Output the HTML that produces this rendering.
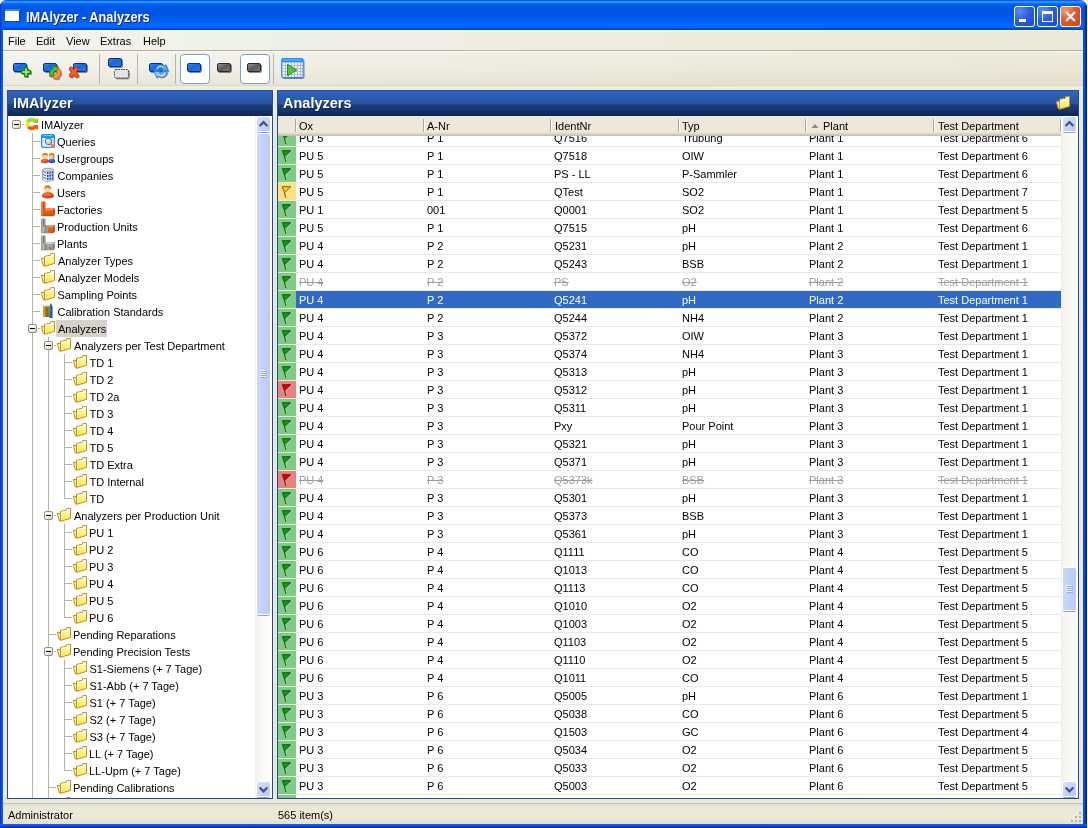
<!DOCTYPE html>
<html lang="en"><head><meta charset="utf-8"><title>IMAlyzer - Analyzers</title>
<style>
html,body{margin:0;padding:0;}
body{width:1088px;height:828px;overflow:hidden;background:#fff;font-family:"Liberation Sans",sans-serif;font-size:11px;color:#000;position:relative;}
#win{position:absolute;left:0;top:0;width:1087px;height:828px;background:#ece9d8;border-radius:6px 7px 0 0;overflow:hidden;will-change:transform;}
#win *{position:absolute;box-sizing:border-box;}
i,b{display:block;font-style:normal;font-weight:normal;}
/* title bar */
#tb{left:0;top:0;width:1087px;height:30px;background:linear-gradient(to bottom,#0046e0 0px,#0a5cec 0.5px,#3c98ff 1.700px,#2a88ff 2.500px,#0a70fa 3.500px,#0064f0 4.500px,#005ae6 6.500px,#0055e1 10px,#0056e4 15px,#005df0 19px,#0066fc 23px,#0067fe 27px,#005cf0 28px,#0046d2 29px,#0036bc 30px);}
#tbl{left:0;top:4px;width:3px;height:824px;background:linear-gradient(to right,#0131bd,#0b54e4 60%,#1660ee);}
#tbr{left:1083px;top:5px;width:4px;height:823px;background:linear-gradient(to right,#0d55ea 0%,#0648dc 40%,#0129b4 75%,#00178f 100%);}
#tbb{left:0;top:824px;width:1087px;height:4px;background:linear-gradient(to bottom,#1660ee,#0b54e4 40%,#0131bd 75%,#001ea0);}
#ticon{left:5px;top:9px;width:15px;height:13px;background:#fffffa;border-top:2px solid #3c80e4;border-right:1px solid #1a48b4;border-bottom:1px solid #1a48b4;}#ticon:after{content:"";position:absolute;right:0;top:-1px;width:1px;height:1px;background:#f0642a;}
#ttxt{left:26px;top:7px;height:20px;line-height:20px;font-size:14.500px;font-weight:bold;color:#fff;text-shadow:1px 1px 0 #0a1883;letter-spacing:0;white-space:nowrap;transform:scaleX(0.88);transform-origin:0 0;}
.wb{top:6px;margin-left:-1px;width:21px;height:21px;border:1px solid #fff;border-radius:3px;background:radial-gradient(circle at 25% 20%,#5d8af5 0%,#2d5fe4 45%,#1f48c8 100%);}
.wb.cl{background:radial-gradient(circle at 22% 18%,#f09a80 0%,#e25a30 45%,#d8400f 100%);}
/* menu */
#menu{left:3px;top:30px;width:1080px;height:20px;border-top:1px solid #fcfbf2;background:linear-gradient(to right,#f4f3ee 0%,#f1f0e8 25%,#eeebdc 70%,#ede9d8 100%);}
#menu span{top:3px;height:14px;line-height:14px;font-size:11px;letter-spacing:0;white-space:nowrap;}
#ml1{left:3px;top:50px;width:1080px;height:1px;background:#b4b09f;}
#ml2{left:3px;top:51px;width:1080px;height:1px;background:#fbfaf6;}
#tool{left:3px;top:52px;width:1080px;height:33px;background:linear-gradient(to bottom,rgba(255,255,255,0.12) 0%,rgba(255,255,255,0) 45%,rgba(150,140,100,0.10) 100%),linear-gradient(to right,#f3f2ec 0%,#f0efe6 25%,#edeadb 70%,#ece8d7 100%);}
#tl1{left:3px;top:85px;width:1080px;height:1px;background:#dcd8c6;}
#tl2{left:3px;top:86px;width:1080px;height:4px;background:#f1eddb;}
.sep{top:54px;width:1px;height:30px;background:#b9b5a4;}
.pbtn{top:54px;width:30px;height:30px;background:#fff;border:1px solid #7f9fc6;border-radius:4px;}
.tico{overflow:visible;}
/* panels */
.panel{top:90px;height:709px;border:1px solid #1f4b9c;border-top:none;background:#fff;}
#pl{left:7px;width:266px;}
#pr{left:277px;width:802px;}
.ph{left:-1px;top:0;height:26px;background:linear-gradient(to bottom,#3065c0 0%,#2c5db4 22%,#27549f 52%,#1c407c 55%,#15346c 78%,#0c2452 100%);border-left:1px solid #1f4b9c;border-right:1px solid #1f4b9c;border-top:1px solid #2a569f;}
.pht{left:5px;top:2px;height:20px;line-height:20px;font-size:15.5px;font-weight:bold;color:#fff;transform:scaleX(0.935);transform-origin:0 0;white-space:nowrap;text-shadow:1px 1px 0 rgba(5,20,60,0.55);}
/* tree */
#tree{left:0;top:116px;width:255px;height:682px;overflow:hidden;}
.vl{width:1px;background:#b8b4a2;}
.hl{height:1px;background:#b8b4a2;}
.ex{width:9px;height:9px;border:1px solid #8c917b;border-radius:2px;background:linear-gradient(135deg,#fff 0%,#f4f3ec 50%,#cfcdbd 100%);}
.ex b{left:1px;top:3px;width:5px;height:1px;background:#000;}
.ti{overflow:visible;}
.tt{height:16px;line-height:16px;font-size:11px;letter-spacing:0;white-space:nowrap;padding:0 2px;margin-left:-2px;}
.tsel{background:#d5d2c9;margin-top:-1px;height:17px;line-height:18px;padding-right:1px;}
/* scrollbars */
.sb{width:17px;background:linear-gradient(to right,#f2f0ea 0%,#f8f7f3 40%,#fefefd 100%);}
.sbtn{left:2px;width:13px;height:14px;border-radius:2px;background:linear-gradient(135deg,#d6e1fd 0%,#c2d2fb 60%,#b4c7f7 100%);box-shadow:0 0 0 1px #fff,0 2px 0 0 #84a4e2;}
.sth{left:2px;width:13px;border-radius:2px;background:linear-gradient(to right,#c9d8fc 0%,#c1d1fa 50%,#b9cbf8 100%);box-shadow:0 0 0 1px #fff,0 2px 0 0 #84a4e2;}
.grip{left:3px;width:6px;height:8px;background:repeating-linear-gradient(to bottom,#f4f8ff 0,#f4f8ff 1px,rgba(255,255,255,0) 1px,rgba(255,255,255,0) 2px);}.grip:after{content:"";position:absolute;left:1px;top:1px;width:6px;height:8px;background:repeating-linear-gradient(to bottom,#8aa8f0 0,#8aa8f0 1px,rgba(255,255,255,0) 1px,rgba(255,255,255,0) 2px);}
/* grid */
#gh{left:278px;top:116px;width:783px;height:20px;background:linear-gradient(to bottom,#ece9d8 0,#ece9d8 16px,#e4e1cf 17px,#d8d4c3 18px,#cac6b4 19px,#c2beab 20px);}
#ghl{display:none;}
#gh span{top:3px;height:14px;line-height:14px;font-size:11px;letter-spacing:0;white-space:nowrap;}
#gh i{top:3px;width:1px;height:13px;background:#aca899;box-shadow:1px 0 0 #fff;}
#grid{left:278px;top:136px;width:783px;height:662px;overflow:hidden;background:#fff;}
.gr{left:0;width:783px;height:18px;border-bottom:1px solid #ece9d8;}
.gr.sel{background:#316ac5;color:#fff;}
.gr.del{color:#9d9d9d;text-decoration:line-through;}
.gc{top:1px;height:17px;line-height:17px;font-size:11px;letter-spacing:0;white-space:nowrap;}
.del .gc{text-decoration:line-through;}
.fc{left:0;top:0;width:18px;height:17px;}
.fg{background:#7fca84;}.fy{background:#ffe07f;}.fr{background:#e88181;}
.fc svg{left:0;top:0;}
/* status */
#sl1{left:3px;top:803px;width:1080px;height:1px;background:#c5c2b2;}
#st{left:3px;top:804px;width:1080px;height:20px;background:linear-gradient(to bottom,#e3e0cf 0%,#ebe8d7 20%,#ece9d8 70%,#e4e0cc 100%);}
#st span{top:4px;height:14px;line-height:14px;letter-spacing:0;white-space:nowrap;}

</style></head>
<body>
<svg width="0" height="0" style="position:absolute"><defs>
<linearGradient id="gfold" x1="0.6" y1="0" x2="0.35" y2="1"><stop offset="0" stop-color="#fffce2"/><stop offset="0.4" stop-color="#fff692"/><stop offset="1" stop-color="#ffe334"/></linearGradient>
<linearGradient id="gblue" x1="0" y1="0" x2="0" y2="1"><stop offset="0" stop-color="#1f6fe0"/><stop offset="1" stop-color="#3f96f4"/></linearGradient>
<linearGradient id="ggray" x1="0" y1="0" x2="0" y2="1"><stop offset="0" stop-color="#5a5a5a"/><stop offset="1" stop-color="#8a8a8a"/></linearGradient>
<linearGradient id="gor" x1="0" y1="0" x2="0" y2="1"><stop offset="0" stop-color="#f47a20"/><stop offset="1" stop-color="#d84e05"/></linearGradient>
<linearGradient id="ggr" x1="0" y1="0" x2="1" y2="0"><stop offset="0" stop-color="#8e8e8e"/><stop offset="0.12" stop-color="#c4c4c4"/><stop offset="0.3" stop-color="#8a8a8a"/><stop offset="0.6" stop-color="#b4b4b4"/><stop offset="1" stop-color="#7a7a7a"/></linearGradient>
<symbol id="i-folder" viewBox="0 0 16 16"><path d="M1.300 6.300 L4.400 6.600 L4.500 14.200 L3.200 13.400 Z" fill="#fff4c4" stroke="#c48e14" stroke-width="1" stroke-linejoin="round"/><path d="M4.500 4.400 L10.300 3.300 L10.700 1.600 L14.500 1.600 L14.500 11.400 L4.600 14.300 Z" fill="url(#gfold)" stroke="#c48e14" stroke-width="1" stroke-linejoin="round"/><path d="M5.500 5.300 L11.100 4.200 L11.500 2.600 L13.600 2.600 L13.600 5" fill="none" stroke="#fffff2" stroke-width="0.900"/><path d="M5.500 5.600 L5.500 12.800" fill="none" stroke="#fffde0" stroke-width="0.800"/></symbol>
<symbol id="i-root" viewBox="0 0 16 16"><path d="M4.390 10.860 A4.450 4.450 0 0 1 3.770 6.120" fill="none" stroke="#ffe030" stroke-width="3.700"/><path d="M3.770 6.120 A4.450 4.450 0 0 1 11.210 5.140" fill="none" stroke="#98da28" stroke-width="3.700"/><path d="M14.100 1.700 L14.100 6.900 L8.800 6.800 Z" fill="#8ed41e"/><path d="M11.210 10.860 A4.450 4.450 0 0 1 4.390 10.860" fill="none" stroke="#f25e04" stroke-width="3.700"/><path d="M14.100 14.300 L14.100 9.100 L8.800 9.200 Z" fill="#ee5600"/><path d="M4.800 4.300 A4.900 4.900 0 0 1 10.600 3.600" fill="none" stroke="#b2e64e" stroke-width="0.900"/></symbol>
<symbol id="i-query" viewBox="0 0 16 16"><rect x="1.600" y="1.600" width="12.800" height="12.800" rx="1.600" fill="#f6f2ff" stroke="#0a96fa" stroke-width="1.300"/><rect x="1.600" y="1.600" width="12.800" height="3.300" rx="1" fill="#0a96fa"/><path d="M2.800 2.700 H12.600" stroke="#a6d8ff" stroke-width="0.800"/><g fill="#e2d6f4"><rect x="3" y="6.500" width="1" height="1"/><rect x="3" y="8.500" width="1" height="1"/><rect x="3" y="10.500" width="1" height="1"/><rect x="3" y="12.400" width="10" height="0.900"/><rect x="12" y="6.500" width="1" height="1"/><rect x="12" y="8.500" width="1" height="1"/></g><circle cx="8.500" cy="8.400" r="3.100" fill="#a6e2ff" stroke="#6e7074" stroke-width="1.100"/><circle cx="7.700" cy="7.500" r="1.300" fill="#e8f8ff"/><path d="M11.300 11.300 L13.700 13.700" stroke="#fa7420" stroke-width="2.400" stroke-linecap="round"/><path d="M11.800 11.800 L13.600 13.600" stroke="#ffd040" stroke-width="0.700" stroke-dasharray="0.700 0.700"/></symbol>
<symbol id="i-ugroup" viewBox="0 0 16 16"><defs><radialGradient id="gred" cx="0.4" cy="0.3" r="0.8"><stop offset="0" stop-color="#fa8a34"/><stop offset="0.6" stop-color="#e24a14"/><stop offset="1" stop-color="#c01c08"/></radialGradient><radialGradient id="gblu" cx="0.4" cy="0.3" r="0.8"><stop offset="0" stop-color="#3a8af0"/><stop offset="0.6" stop-color="#1458d4"/><stop offset="1" stop-color="#0a30a8"/></radialGradient></defs><path d="M0.900 12 C0.800 9.600 2.600 8.300 4.900 8.300 C7.200 8.300 8.800 9.600 8.700 12 C7 13.500 2.600 13.500 0.900 12 Z" fill="url(#gred)"/><path d="M8.300 12 C8.200 9.600 9.400 8.300 11.600 8.300 C13.800 8.300 15.300 9.600 15.200 12 C13.600 13.500 9.800 13.500 8.300 12 Z" fill="url(#gblu)"/><circle cx="5.100" cy="6.200" r="2.500" fill="#fdd09a"/><path d="M2.200 6.600 C1.800 3.800 3.400 2.700 5.100 2.700 C6.800 2.700 8.400 3.800 8 6.600 C7.400 5.300 6.400 4.800 5.100 4.900 C3.800 4.800 2.800 5.300 2.200 6.600 Z" fill="#c18a12"/><circle cx="11.100" cy="6.200" r="2.500" fill="#fdc88a"/><path d="M8.800 5.600 C8.900 3.600 10.200 2.700 11.800 2.700 C13.700 2.700 14.900 4.200 14.600 6.400 L14.300 8.400 L12.800 8.600 C13.300 7 13 5.600 12.400 4.900 C11 5.200 9.600 5.200 8.800 5.600 Z" fill="#c99214"/><path d="M10.300 8.600 L11 9.600 L11.700 8.600 Z" fill="#bfe8ff"/></symbol>
<symbol id="i-company" viewBox="0 0 16 16"><path d="M2.500 2.600 L6 1.300 L11.500 1.300 L13.600 2.600 L13.600 13.300 L6.500 14.600 L2.500 12.800 Z" fill="#eceff2" stroke="#868c94" stroke-width="0.900" stroke-linejoin="round"/><path d="M2.900 3 L6.300 3.800 L6.300 14.100 L2.900 12.600 Z" fill="#f4f8ff"/><g stroke="#3a7ae2" stroke-width="1.100"><path d="M3.100 4.300 L6.100 6"/><path d="M3.100 7.300 L6.100 9"/><path d="M3.100 10.300 L6.100 12"/></g><path d="M6.300 3.800 L13.200 2.900 L13.200 13 L6.300 14.100 Z" fill="#e4e8ee"/><g fill="#1244d2"><rect x="7" y="4.600" width="1.500" height="2.200"/><rect x="9.400" y="4.400" width="1.500" height="2.200"/><rect x="11.700" y="4.200" width="1.300" height="2.200"/><rect x="7" y="7.700" width="1.500" height="2.200"/><rect x="9.400" y="7.500" width="1.500" height="2.200"/><rect x="11.700" y="7.300" width="1.300" height="2.200"/><rect x="7" y="10.800" width="1.500" height="2.200"/><rect x="9.400" y="10.600" width="1.500" height="2.200"/><rect x="11.700" y="10.400" width="1.300" height="2.200"/></g><path d="M2.500 2.600 L6.300 3.600 L13.600 2.600" fill="none" stroke="#9aa0a8" stroke-width="0.700"/></symbol>
<symbol id="i-user" viewBox="0 0 16 16"><path d="M1.900 12.500 C1.700 9.400 4.500 7.900 7.900 7.900 C11.300 7.900 14.100 9.400 13.900 12.500 C11.500 15.100 4.300 15.100 1.900 12.500 Z" fill="url(#gred)"/><circle cx="7.600" cy="5.400" r="3" fill="#fdd09a"/><path d="M4.300 5.600 C3.800 2.600 5.600 1.200 7.700 1.200 C9.900 1.200 11.600 2.800 10.900 5.800 C10.400 4.300 9.200 3.600 7.600 3.800 C6 3.600 4.900 4.200 4.300 5.600 Z" fill="#c08a14"/><path d="M6.600 8.300 L7.600 9.500 L8.600 8.300 Z" fill="#5a78b8"/></symbol>
<symbol id="i-factory" viewBox="0 0 16 16"><path d="M1.400 1.400 Q1.400 0.700 2.200 0.700 L4.400 0.700 Q5.200 0.700 5.200 1.400 L5.200 7.600 L14.600 7.600 L14.600 13.600 L13.400 15 L1.400 15 Z" fill="url(#gor)" stroke="#b84504" stroke-width="0.500"/><path d="M5.200 7.600 L14.600 7.600 L13.200 9.200 L5.200 9.200 Z" fill="#fa9448"/><path d="M13.200 9.200 L14.600 7.600 L14.600 13.600 L13.200 15 Z" fill="#b84404"/><path d="M3.500 1.500 L3.500 8.600" stroke="#a63c02" stroke-width="0.800"/><path d="M2.200 1.200 L2.200 14.500" stroke="#fa9a50" stroke-width="0.800"/></symbol>
<symbol id="i-punit" viewBox="0 0 16 16"><path d="M1.400 1.400 Q1.400 0.700 2.200 0.700 L4.400 0.700 Q5.200 0.700 5.200 1.400 L5.200 7.600 L14.600 7.600 L14.600 13.600 L13.400 15 L1.400 15 Z" fill="url(#ggr)" stroke="#707070" stroke-width="0.500"/><path d="M3.500 1.500 L3.500 8.600" stroke="#5e5e5e" stroke-width="0.800"/><path d="M7.800 7.800 L14.600 7.800 L14.600 13.400 L13.400 14.700 L7.800 14.700 Z" fill="url(#gor)"/><path d="M7.800 7.800 L14.600 7.800 L13.300 9 L7.800 9 Z" fill="#fa9448"/><path d="M13.300 9 L14.600 7.800 L14.600 13.400 L13.300 14.700 Z" fill="#b84404"/></symbol>
<symbol id="i-plant" viewBox="0 0 16 16"><path d="M1.400 1.400 Q1.400 0.700 2.200 0.700 L4.400 0.700 Q5.200 0.700 5.200 1.400 L5.200 7.600 L14.600 7.600 L14.600 13.600 L13.400 15 L1.400 15 Z" fill="url(#ggr)" stroke="#707070" stroke-width="0.500"/><path d="M3.500 1.500 L3.500 8.600" stroke="#5e5e5e" stroke-width="0.800"/><path d="M5.200 7.600 L14.600 7.600 L13.200 9 L5.200 9 Z" fill="#d8d8d8"/><path d="M9.400 9 L9.400 15" stroke="#a0a0a0" stroke-width="0.600"/><rect x="8.800" y="12.300" width="2.200" height="1.800" fill="#e8580c"/></symbol>
<symbol id="i-calib" viewBox="0 0 16 16"><defs><linearGradient id="gcy" x1="0" y1="0" x2="1" y2="0"><stop offset="0" stop-color="#9a6a0a"/><stop offset="0.18" stop-color="#dca018"/><stop offset="0.6" stop-color="#8a5e0a"/><stop offset="1" stop-color="#b47c10"/></linearGradient></defs><path d="M3.300 3.800 Q3.300 2.800 4.500 2.800 L9.200 2.800 L9.200 14 L4.500 14 Q3.300 14 3.300 13 Z" fill="url(#gcy)"/><path d="M3.600 3.600 Q6 2.600 9.200 3.300 L9.200 4.300 Q6 3.800 3.600 4.400 Z" fill="#e4ac28"/><path d="M9.300 3.200 L10 2.600 L10.200 0.800 L11.600 0.800 L11.900 2.600 L12.500 3.200 L12.500 14.600 Q12.500 15.100 11.800 15.100 L10 15.100 Q9.300 15.100 9.300 14.600 Z" fill="#1e6cae"/><path d="M11.600 3.400 L11.600 14.600" stroke="#16528a" stroke-width="0.900"/><path d="M10 3.400 L10 14.600" stroke="#3c88c8" stroke-width="0.700"/></symbol>
<symbol id="i-flagg" viewBox="0 0 18 17"><path d="M5.700 9.300 L6.900 14.300" fill="none" stroke="#d4efd4" stroke-width="0.700" opacity="0.450"/><path d="M13.700 4.300 L7.700 9.900 L8.600 13.600" fill="none" stroke="#d4efd4" stroke-width="0.800" opacity="0.550"/><path d="M4.300 3.700 L12.800 3.700 L6.500 9.700 Z" fill="#02a012" stroke="#164c1a" stroke-width="0.900" stroke-linejoin="round"/><path d="M6.500 9.700 L7.700 14.300" fill="none" stroke="#164c1a" stroke-width="1.100" stroke-linecap="round"/><path d="M13.300 3.300 L13.900 3.900" stroke="#d4efd4" stroke-width="0.800"/></symbol>
<symbol id="i-flagy" viewBox="0 0 18 17"><path d="M5.700 9.300 L6.900 14.300" fill="none" stroke="#fff6d0" stroke-width="0.700" opacity="0.450"/><path d="M13.700 4.300 L7.700 9.900 L8.600 13.600" fill="none" stroke="#fff6d0" stroke-width="0.800" opacity="0.550"/><path d="M4.300 3.700 L12.800 3.700 L6.500 9.700 Z" fill="#ffcf00" stroke="#6a5810" stroke-width="0.900" stroke-linejoin="round"/><path d="M6.500 9.700 L7.700 14.300" fill="none" stroke="#6a5810" stroke-width="1.100" stroke-linecap="round"/><path d="M13.300 3.300 L13.900 3.900" stroke="#fff6d0" stroke-width="0.800"/></symbol>
<symbol id="i-flagr" viewBox="0 0 18 17"><path d="M5.700 9.300 L6.900 14.300" fill="none" stroke="#fbdada" stroke-width="0.700" opacity="0.450"/><path d="M13.700 4.300 L7.700 9.900 L8.600 13.600" fill="none" stroke="#fbdada" stroke-width="0.800" opacity="0.550"/><path d="M4.300 3.700 L12.800 3.700 L6.500 9.700 Z" fill="#e00000" stroke="#5a1212" stroke-width="0.900" stroke-linejoin="round"/><path d="M6.500 9.700 L7.700 14.300" fill="none" stroke="#5a1212" stroke-width="1.100" stroke-linecap="round"/><path d="M13.300 3.300 L13.900 3.900" stroke="#fbdada" stroke-width="0.800"/></symbol>
</defs></svg>
<div id="win">
<div id="tb"></div><div id="tbl"></div><div id="tbr"></div><div id="tbb"></div>
<div id="ticon"></div>
<div id="ttxt">IMAlyzer - Analyzers</div>
<div class="wb" style="left:1015px"><svg width="19" height="19" style="left:0;top:0"><rect x="4" y="12" width="7" height="3" fill="#fff"/></svg></div>
<div class="wb" style="left:1038px"><svg width="19" height="19" style="left:0;top:0"><rect x="4.500" y="5.500" width="10" height="9" fill="none" stroke="#fff"/><rect x="4" y="4" width="11" height="3" fill="#fff"/></svg></div>
<div class="wb cl" style="left:1061px"><svg width="19" height="19" style="left:0;top:0"><path d="M5 5 L14 14 M14 5 L5 14" stroke="#fff" stroke-width="2.200"/></svg></div>
<div id="menu"><span style="left:5px">File</span><span style="left:33px">Edit</span><span style="left:63px">View</span><span style="left:97px">Extras</span><span style="left:140px">Help</span></div>
<div id="ml1"></div><div id="ml2"></div>
<div id="tool"></div><div id="tl1"></div><div id="tl2"></div>
<div class="sep" style="left:99px"></div><div class="sep" style="left:137px"></div><div class="sep" style="left:175px"></div><div class="sep" style="left:273px"></div>
<div class="pbtn" style="left:180px"></div><div class="pbtn" style="left:240px"></div>
<svg class="tico" width="300" height="34" style="left:3px;top:52px" viewBox="3 52 300 34">
<defs>
<linearGradient id="tb1" x1="0" y1="0" x2="1" y2="1"><stop offset="0" stop-color="#4a86e0"/><stop offset="0.45" stop-color="#1768d8"/><stop offset="1" stop-color="#0a8cf4"/></linearGradient>
<linearGradient id="tg1" x1="0" y1="0" x2="1" y2="1"><stop offset="0" stop-color="#9a9a9a"/><stop offset="0.5" stop-color="#5a5a5a"/><stop offset="1" stop-color="#7d7d7d"/></linearGradient>
<filter id="sh" x="-20%" y="-20%" width="150%" height="160%"><feDropShadow dx="1" dy="1" stdDeviation="0.700" flood-color="#000" flood-opacity="0.450"/></filter>
</defs>
<g filter="url(#sh)">
<rect x="13.500" y="63.500" width="13" height="8" rx="1.500" fill="url(#tb1)" stroke="#0b2a9e"/>
<path d="M24.500 67.500 h3 v3 h3 v3 h-3 v3 h-3 v-3 h-3 v-3 h3 z" fill="#52dc2c" stroke="#0c7c10" stroke-width="1"/><path d="M26 69 v6 M23 72 h6" stroke="#a8f58a" stroke-width="1"/>
<rect x="43.500" y="63.500" width="13" height="8" rx="1.500" fill="url(#tb1)" stroke="#0b2a9e"/>
<path d="M49.700 76.200 C48.800 71.500 50.600 69.200 53 68.700 L51.800 66.700 L58 66.300 L56.600 72.300 L55.300 70.700 C53.800 71.300 52.900 73 53.300 76 Z" fill="#45c040" stroke="#0f7a1a" stroke-width="0.800" stroke-linejoin="round"/>
<path d="M59.300 68.800 C62 72.500 60.500 76.500 57.800 77.300 L58.600 78.900 L53.400 78.300 L54.300 73.200 L55.600 74.800 C57.300 73.900 57.800 72 56.600 69.700 Z" fill="#fa9a3a" stroke="#e8501a" stroke-width="0.800" stroke-linejoin="round"/>
<rect x="73.500" y="63.500" width="13" height="8" rx="1.500" fill="url(#tb1)" stroke="#0b2a9e"/>
<path d="M71 68.800 L76.600 75.400 M76.600 68.800 L71 75.400" stroke="#c8300a" stroke-width="4.200" stroke-linecap="round"/><path d="M71 68.800 L76.600 75.400 M76.600 68.800 L71 75.400" stroke="#f4622c" stroke-width="2.400" stroke-linecap="round"/>
<rect x="108.500" y="58.500" width="13" height="8" rx="1.500" fill="url(#tb1)" stroke="#0b2a9e"/>
<rect x="114.500" y="69.500" width="14" height="8.500" rx="1.500" fill="#e4e4e4" stroke="#3a3a3a" stroke-dasharray="1.500 1"/>
<rect x="149.500" y="63.500" width="13" height="8" rx="1.500" fill="url(#tb1)" stroke="#0b2a9e"/>
<path d="M155.200 70.300 C155.400 65.300 161 63.600 164.300 66.200 L165.600 64.600 L168 70.800 L161.300 70.600 L162.600 68.600 C160.600 67.300 158.600 68 158.300 70.500 Z" fill="#5ab0fa" stroke="#1766d8" stroke-width="0.800" stroke-linejoin="round"/>
<path d="M157 68 C158 66 161 65.400 163.400 67" fill="none" stroke="#d6ecff" stroke-width="0.900"/>
<path d="M166.800 71.600 C166.600 76.600 161 78.300 157.700 75.800 L156.400 77.400 L154 71.200 L160.700 71.400 L159.400 73.400 C161.400 74.700 163.400 74 163.700 71.500 Z" fill="#8ccafc" stroke="#1f78e0" stroke-width="0.800" stroke-linejoin="round"/>
<path d="M165 73.800 C164 76 161 76.600 158.600 75" fill="none" stroke="#e6f4ff" stroke-width="0.900"/>
</g>
</svg>
<svg class="tico" width="300" height="34" style="left:3px;top:52px" viewBox="3 52 300 34">
<g filter="url(#sh)">
<rect x="187.500" y="63.500" width="13" height="8" rx="1.500" fill="url(#tb1)" stroke="#0b2a9e"/>
<rect x="217.500" y="63.500" width="13" height="8" rx="1.500" fill="url(#tg1)" stroke="#2a2a2a"/>
<rect x="247.500" y="63.500" width="13" height="8" rx="1.500" fill="url(#tg1)" stroke="#2a2a2a"/>
<rect x="281.800" y="58.800" width="21" height="18.500" rx="1.500" fill="#fff" stroke="#1e90ff" stroke-width="1.400"/>
</g>
<rect x="282" y="59" width="20.600" height="3" fill="#1e90ff"/>
<path d="M283 60 h18.500" stroke="#9fd0ff" stroke-width="0.800"/>
<g fill="#b9b6dc"><rect x="282.500" y="62" width="20" height="15"/></g>
<g fill="#f4f2ff">
<rect x="283" y="63" width="2" height="2"/><rect x="286" y="63" width="2" height="2"/><rect x="289" y="63" width="2" height="2"/><rect x="292" y="63" width="2" height="2"/><rect x="295" y="63" width="2" height="2"/><rect x="298" y="63" width="2" height="2"/><rect x="301" y="63" width="1.500" height="2"/>
<rect x="283" y="66" width="2" height="2"/><rect x="286" y="66" width="2" height="2"/><rect x="289" y="66" width="2" height="2"/><rect x="292" y="66" width="2" height="2"/><rect x="295" y="66" width="2" height="2"/><rect x="298" y="66" width="2" height="2"/><rect x="301" y="66" width="1.500" height="2"/>
<rect x="283" y="69" width="2" height="2"/><rect x="286" y="69" width="2" height="2"/><rect x="289" y="69" width="2" height="2"/><rect x="292" y="69" width="2" height="2"/><rect x="295" y="69" width="2" height="2"/><rect x="298" y="69" width="2" height="2"/><rect x="301" y="69" width="1.500" height="2"/>
<rect x="283" y="72" width="2" height="2"/><rect x="286" y="72" width="2" height="2"/><rect x="289" y="72" width="2" height="2"/><rect x="292" y="72" width="2" height="2"/><rect x="295" y="72" width="2" height="2"/><rect x="298" y="72" width="2" height="2"/><rect x="301" y="72" width="1.500" height="2"/>
<rect x="283" y="75" width="2" height="1.800"/><rect x="286" y="75" width="2" height="1.800"/><rect x="289" y="75" width="2" height="1.800"/><rect x="292" y="75" width="2" height="1.800"/><rect x="295" y="75" width="2" height="1.800"/><rect x="298" y="75" width="2" height="1.800"/><rect x="301" y="75" width="1.500" height="1.800"/>
</g>
<path d="M287.500 64.300 L296.800 70 L287.500 75.700 Z" fill="#4fc82e" stroke="#1c9a14" stroke-width="1" stroke-linejoin="round"/>
</svg>

<div class="panel" id="pl"><div class="ph" style="width:266px"><span class="pht">IMAlyzer</span></div></div>
<div class="panel" id="pr"><div class="ph" style="width:802px"><span class="pht">Analyzers</span></div></div>
<div class="sb" style="left:255px;top:116px;height:682px"><div class="sbtn" style="top:1px"><svg width="13" height="14" style="left:0;top:0"><path d="M2.600 9 L6.500 5.100 L10.400 9" fill="none" stroke="#42557a" stroke-width="2.200"/></svg></div><div class="sth" style="top:18px;height:480px"><div class="grip" style="top:236px"></div></div><div class="sbtn" style="top:666px"><svg width="13" height="14" style="left:0;top:0"><path d="M2.600 5.500 L6.500 9.400 L10.400 5.500" fill="none" stroke="#42557a" stroke-width="2.200"/></svg></div></div>
<div class="sb" style="left:1061px;top:116px;height:682px"><div class="sbtn" style="top:1px"><svg width="13" height="14" style="left:0;top:0"><path d="M2.600 9 L6.500 5.100 L10.400 9" fill="none" stroke="#42557a" stroke-width="2.200"/></svg></div><div class="sth" style="top:452px;height:42px"><div class="grip" style="top:17px"></div></div><div class="sbtn" style="top:666px"><svg width="13" height="14" style="left:0;top:0"><path d="M2.600 5.500 L6.500 9.400 L10.400 5.500" fill="none" stroke="#42557a" stroke-width="2.200"/></svg></div></div>
<div id="gh"><i style="left:17px"></i><span style="left:21px">Ox</span><i style="left:145px"></i><span style="left:149px">A-Nr</span><i style="left:272px"></i><span style="left:277px">IdentNr</span><i style="left:400px"></i><span style="left:404px">Typ</span><i style="left:527px"></i><svg width="9" height="6" style="left:533px;top:7px"><path d="M0.500 5 L4 1 L7.500 5 Z" fill="#8a8a80"/></svg><span style="left:545px">Plant</span><i style="left:655px"></i><span style="left:660px">Test Department</span><i style="left:782px"></i></div>
<div id="ghl"></div>
<div id="sl1"></div>
<div id="st"><span style="left:5px">Administrator</span><span style="left:275px">565 item(s)</span><svg width="14" height="14" style="left:1066px;top:6px"><g fill="#b8b4a2"><rect x="10" y="2" width="2" height="2"/><rect x="6" y="6" width="2" height="2"/><rect x="10" y="6" width="2" height="2"/><rect x="2" y="10" width="2" height="2"/><rect x="6" y="10" width="2" height="2"/><rect x="10" y="10" width="2" height="2"/></g></svg></div>
<svg width="18" height="16" style="left:1054px;top:95px"><use href="#i-folder"/></svg>
<div id="tree">
<i class="hl" style="left:22px;top:8px;width:2px"></i><i class="ex" style="left:12px;top:4px"><b></b></i><svg class="ti" style="left:24px;top:0px" width="16" height="16"><use href="#i-root"/></svg><span class="tt" style="left:41px;top:1px">IMAlyzer</span>
<i class="vl" style="left:32px;top:17px;height:17px"></i><i class="hl" style="left:33px;top:25px;width:7px"></i><svg class="ti" style="left:40px;top:17px" width="16" height="16"><use href="#i-query"/></svg><span class="tt" style="left:57px;top:18px">Queries</span>
<i class="vl" style="left:32px;top:34px;height:17px"></i><i class="hl" style="left:33px;top:42px;width:7px"></i><svg class="ti" style="left:40px;top:34px" width="16" height="16"><use href="#i-ugroup"/></svg><span class="tt" style="left:57px;top:35px">Usergroups</span>
<i class="vl" style="left:32px;top:51px;height:17px"></i><i class="hl" style="left:33px;top:59px;width:7px"></i><svg class="ti" style="left:40px;top:51px" width="16" height="16"><use href="#i-company"/></svg><span class="tt" style="left:57.5px;top:52px">Companies</span>
<i class="vl" style="left:32px;top:68px;height:17px"></i><i class="hl" style="left:33px;top:76px;width:7px"></i><svg class="ti" style="left:40px;top:68px" width="16" height="16"><use href="#i-user"/></svg><span class="tt" style="left:57px;top:69px">Users</span>
<i class="vl" style="left:32px;top:85px;height:17px"></i><i class="hl" style="left:33px;top:93px;width:7px"></i><svg class="ti" style="left:40px;top:85px" width="16" height="16"><use href="#i-factory"/></svg><span class="tt" style="left:57px;top:86px">Factories</span>
<i class="vl" style="left:32px;top:102px;height:17px"></i><i class="hl" style="left:33px;top:110px;width:7px"></i><svg class="ti" style="left:40px;top:102px" width="16" height="16"><use href="#i-punit"/></svg><span class="tt" style="left:57px;top:103px">Production Units</span>
<i class="vl" style="left:32px;top:119px;height:17px"></i><i class="hl" style="left:33px;top:127px;width:7px"></i><svg class="ti" style="left:40px;top:119px" width="16" height="16"><use href="#i-plant"/></svg><span class="tt" style="left:57px;top:120px">Plants</span>
<i class="vl" style="left:32px;top:136px;height:17px"></i><i class="hl" style="left:33px;top:144px;width:7px"></i><svg class="ti" style="left:40px;top:136px" width="16" height="16"><use href="#i-folder"/></svg><span class="tt" style="left:58px;top:137px">Analyzer Types</span>
<i class="vl" style="left:32px;top:153px;height:17px"></i><i class="hl" style="left:33px;top:161px;width:7px"></i><svg class="ti" style="left:40px;top:153px" width="16" height="16"><use href="#i-folder"/></svg><span class="tt" style="left:58px;top:154px">Analyzer Models</span>
<i class="vl" style="left:32px;top:170px;height:17px"></i><i class="hl" style="left:33px;top:178px;width:7px"></i><svg class="ti" style="left:40px;top:170px" width="16" height="16"><use href="#i-folder"/></svg><span class="tt" style="left:57.5px;top:171px">Sampling Points</span>
<i class="vl" style="left:32px;top:187px;height:17px"></i><i class="hl" style="left:33px;top:195px;width:7px"></i><svg class="ti" style="left:40px;top:187px" width="16" height="16"><use href="#i-calib"/></svg><span class="tt" style="left:57.5px;top:188px">Calibration Standards</span>
<i class="vl" style="left:32px;top:204px;height:17px"></i><i class="hl" style="left:38px;top:212px;width:2px"></i><i class="ex" style="left:28px;top:208px"><b></b></i><svg class="ti" style="left:40px;top:204px" width="16" height="16"><use href="#i-folder"/></svg><span class="tt tsel" style="left:58px;top:205px">Analyzers</span>
<i class="vl" style="left:32px;top:221px;height:17px"></i><i class="vl" style="left:48px;top:221px;height:17px"></i><i class="hl" style="left:54px;top:229px;width:2px"></i><i class="ex" style="left:44px;top:225px"><b></b></i><svg class="ti" style="left:56px;top:221px" width="16" height="16"><use href="#i-folder"/></svg><span class="tt" style="left:74px;top:222px">Analyzers per Test Department</span>
<i class="vl" style="left:32px;top:238px;height:17px"></i><i class="vl" style="left:48px;top:238px;height:17px"></i><i class="vl" style="left:64px;top:238px;height:17px"></i><i class="hl" style="left:65px;top:246px;width:7px"></i><svg class="ti" style="left:72px;top:238px" width="16" height="16"><use href="#i-folder"/></svg><span class="tt" style="left:89.5px;top:239px">TD 1</span>
<i class="vl" style="left:32px;top:255px;height:17px"></i><i class="vl" style="left:48px;top:255px;height:17px"></i><i class="vl" style="left:64px;top:255px;height:17px"></i><i class="hl" style="left:65px;top:263px;width:7px"></i><svg class="ti" style="left:72px;top:255px" width="16" height="16"><use href="#i-folder"/></svg><span class="tt" style="left:89.5px;top:256px">TD 2</span>
<i class="vl" style="left:32px;top:272px;height:17px"></i><i class="vl" style="left:48px;top:272px;height:17px"></i><i class="vl" style="left:64px;top:272px;height:17px"></i><i class="hl" style="left:65px;top:280px;width:7px"></i><svg class="ti" style="left:72px;top:272px" width="16" height="16"><use href="#i-folder"/></svg><span class="tt" style="left:89.5px;top:273px">TD 2a</span>
<i class="vl" style="left:32px;top:289px;height:17px"></i><i class="vl" style="left:48px;top:289px;height:17px"></i><i class="vl" style="left:64px;top:289px;height:17px"></i><i class="hl" style="left:65px;top:297px;width:7px"></i><svg class="ti" style="left:72px;top:289px" width="16" height="16"><use href="#i-folder"/></svg><span class="tt" style="left:89.5px;top:290px">TD 3</span>
<i class="vl" style="left:32px;top:306px;height:17px"></i><i class="vl" style="left:48px;top:306px;height:17px"></i><i class="vl" style="left:64px;top:306px;height:17px"></i><i class="hl" style="left:65px;top:314px;width:7px"></i><svg class="ti" style="left:72px;top:306px" width="16" height="16"><use href="#i-folder"/></svg><span class="tt" style="left:89.5px;top:307px">TD 4</span>
<i class="vl" style="left:32px;top:323px;height:17px"></i><i class="vl" style="left:48px;top:323px;height:17px"></i><i class="vl" style="left:64px;top:323px;height:17px"></i><i class="hl" style="left:65px;top:331px;width:7px"></i><svg class="ti" style="left:72px;top:323px" width="16" height="16"><use href="#i-folder"/></svg><span class="tt" style="left:89.5px;top:324px">TD 5</span>
<i class="vl" style="left:32px;top:340px;height:17px"></i><i class="vl" style="left:48px;top:340px;height:17px"></i><i class="vl" style="left:64px;top:340px;height:17px"></i><i class="hl" style="left:65px;top:348px;width:7px"></i><svg class="ti" style="left:72px;top:340px" width="16" height="16"><use href="#i-folder"/></svg><span class="tt" style="left:89.5px;top:341px">TD Extra</span>
<i class="vl" style="left:32px;top:357px;height:17px"></i><i class="vl" style="left:48px;top:357px;height:17px"></i><i class="vl" style="left:64px;top:357px;height:17px"></i><i class="hl" style="left:65px;top:365px;width:7px"></i><svg class="ti" style="left:72px;top:357px" width="16" height="16"><use href="#i-folder"/></svg><span class="tt" style="left:89.5px;top:358px">TD Internal</span>
<i class="vl" style="left:32px;top:374px;height:17px"></i><i class="vl" style="left:48px;top:374px;height:17px"></i><i class="vl" style="left:64px;top:374px;height:9px"></i><i class="hl" style="left:65px;top:382px;width:7px"></i><svg class="ti" style="left:72px;top:374px" width="16" height="16"><use href="#i-folder"/></svg><span class="tt" style="left:89.5px;top:375px">TD</span>
<i class="vl" style="left:32px;top:391px;height:17px"></i><i class="vl" style="left:48px;top:391px;height:17px"></i><i class="hl" style="left:54px;top:399px;width:2px"></i><i class="ex" style="left:44px;top:395px"><b></b></i><svg class="ti" style="left:56px;top:391px" width="16" height="16"><use href="#i-folder"/></svg><span class="tt" style="left:74px;top:392px">Analyzers per Production Unit</span>
<i class="vl" style="left:32px;top:408px;height:17px"></i><i class="vl" style="left:48px;top:408px;height:17px"></i><i class="vl" style="left:64px;top:408px;height:17px"></i><i class="hl" style="left:65px;top:416px;width:7px"></i><svg class="ti" style="left:72px;top:408px" width="16" height="16"><use href="#i-folder"/></svg><span class="tt" style="left:89px;top:409px">PU 1</span>
<i class="vl" style="left:32px;top:425px;height:17px"></i><i class="vl" style="left:48px;top:425px;height:17px"></i><i class="vl" style="left:64px;top:425px;height:17px"></i><i class="hl" style="left:65px;top:433px;width:7px"></i><svg class="ti" style="left:72px;top:425px" width="16" height="16"><use href="#i-folder"/></svg><span class="tt" style="left:89px;top:426px">PU 2</span>
<i class="vl" style="left:32px;top:442px;height:17px"></i><i class="vl" style="left:48px;top:442px;height:17px"></i><i class="vl" style="left:64px;top:442px;height:17px"></i><i class="hl" style="left:65px;top:450px;width:7px"></i><svg class="ti" style="left:72px;top:442px" width="16" height="16"><use href="#i-folder"/></svg><span class="tt" style="left:89px;top:443px">PU 3</span>
<i class="vl" style="left:32px;top:459px;height:17px"></i><i class="vl" style="left:48px;top:459px;height:17px"></i><i class="vl" style="left:64px;top:459px;height:17px"></i><i class="hl" style="left:65px;top:467px;width:7px"></i><svg class="ti" style="left:72px;top:459px" width="16" height="16"><use href="#i-folder"/></svg><span class="tt" style="left:89px;top:460px">PU 4</span>
<i class="vl" style="left:32px;top:476px;height:17px"></i><i class="vl" style="left:48px;top:476px;height:17px"></i><i class="vl" style="left:64px;top:476px;height:17px"></i><i class="hl" style="left:65px;top:484px;width:7px"></i><svg class="ti" style="left:72px;top:476px" width="16" height="16"><use href="#i-folder"/></svg><span class="tt" style="left:89px;top:477px">PU 5</span>
<i class="vl" style="left:32px;top:493px;height:17px"></i><i class="vl" style="left:48px;top:493px;height:17px"></i><i class="vl" style="left:64px;top:493px;height:9px"></i><i class="hl" style="left:65px;top:501px;width:7px"></i><svg class="ti" style="left:72px;top:493px" width="16" height="16"><use href="#i-folder"/></svg><span class="tt" style="left:89px;top:494px">PU 6</span>
<i class="vl" style="left:32px;top:510px;height:17px"></i><i class="vl" style="left:48px;top:510px;height:17px"></i><i class="hl" style="left:49px;top:518px;width:7px"></i><svg class="ti" style="left:56px;top:510px" width="16" height="16"><use href="#i-folder"/></svg><span class="tt" style="left:73px;top:511px">Pending Reparations</span>
<i class="vl" style="left:32px;top:527px;height:17px"></i><i class="vl" style="left:48px;top:527px;height:17px"></i><i class="hl" style="left:54px;top:535px;width:2px"></i><i class="ex" style="left:44px;top:531px"><b></b></i><svg class="ti" style="left:56px;top:527px" width="16" height="16"><use href="#i-folder"/></svg><span class="tt" style="left:73px;top:528px">Pending Precision Tests</span>
<i class="vl" style="left:32px;top:544px;height:17px"></i><i class="vl" style="left:48px;top:544px;height:17px"></i><i class="vl" style="left:64px;top:544px;height:17px"></i><i class="hl" style="left:65px;top:552px;width:7px"></i><svg class="ti" style="left:72px;top:544px" width="16" height="16"><use href="#i-folder"/></svg><span class="tt" style="left:89.5px;top:545px">S1-Siemens (+ 7 Tage)</span>
<i class="vl" style="left:32px;top:561px;height:17px"></i><i class="vl" style="left:48px;top:561px;height:17px"></i><i class="vl" style="left:64px;top:561px;height:17px"></i><i class="hl" style="left:65px;top:569px;width:7px"></i><svg class="ti" style="left:72px;top:561px" width="16" height="16"><use href="#i-folder"/></svg><span class="tt" style="left:89.5px;top:562px">S1-Abb (+ 7 Tage)</span>
<i class="vl" style="left:32px;top:578px;height:17px"></i><i class="vl" style="left:48px;top:578px;height:17px"></i><i class="vl" style="left:64px;top:578px;height:17px"></i><i class="hl" style="left:65px;top:586px;width:7px"></i><svg class="ti" style="left:72px;top:578px" width="16" height="16"><use href="#i-folder"/></svg><span class="tt" style="left:89.5px;top:579px">S1 (+ 7 Tage)</span>
<i class="vl" style="left:32px;top:595px;height:17px"></i><i class="vl" style="left:48px;top:595px;height:17px"></i><i class="vl" style="left:64px;top:595px;height:17px"></i><i class="hl" style="left:65px;top:603px;width:7px"></i><svg class="ti" style="left:72px;top:595px" width="16" height="16"><use href="#i-folder"/></svg><span class="tt" style="left:89.5px;top:596px">S2 (+ 7 Tage)</span>
<i class="vl" style="left:32px;top:612px;height:17px"></i><i class="vl" style="left:48px;top:612px;height:17px"></i><i class="vl" style="left:64px;top:612px;height:17px"></i><i class="hl" style="left:65px;top:620px;width:7px"></i><svg class="ti" style="left:72px;top:612px" width="16" height="16"><use href="#i-folder"/></svg><span class="tt" style="left:89.5px;top:613px">S3 (+ 7 Tage)</span>
<i class="vl" style="left:32px;top:629px;height:17px"></i><i class="vl" style="left:48px;top:629px;height:17px"></i><i class="vl" style="left:64px;top:629px;height:17px"></i><i class="hl" style="left:65px;top:637px;width:7px"></i><svg class="ti" style="left:72px;top:629px" width="16" height="16"><use href="#i-folder"/></svg><span class="tt" style="left:89px;top:630px">LL (+ 7 Tage)</span>
<i class="vl" style="left:32px;top:646px;height:17px"></i><i class="vl" style="left:48px;top:646px;height:17px"></i><i class="vl" style="left:64px;top:646px;height:9px"></i><i class="hl" style="left:65px;top:654px;width:7px"></i><svg class="ti" style="left:72px;top:646px" width="16" height="16"><use href="#i-folder"/></svg><span class="tt" style="left:89px;top:647px">LL-Upm (+ 7 Tage)</span>
<i class="vl" style="left:32px;top:663px;height:17px"></i><i class="vl" style="left:48px;top:663px;height:17px"></i><i class="hl" style="left:49px;top:671px;width:7px"></i><svg class="ti" style="left:56px;top:663px" width="16" height="16"><use href="#i-folder"/></svg><span class="tt" style="left:73px;top:664px">Pending Calibrations</span>
<i class="vl" style="left:32px;top:680px;height:17px"></i><i class="vl" style="left:48px;top:680px;height:17px"></i><i class="hl" style="left:49px;top:688px;width:7px"></i><svg class="ti" style="left:56px;top:680px" width="16" height="16"><use href="#i-folder"/></svg><i class="vl" style="left:32px;top:697px;height:17px"></i><i class="vl" style="left:48px;top:697px;height:9px"></i><i class="hl" style="left:49px;top:705px;width:7px"></i><svg class="ti" style="left:56px;top:697px" width="16" height="16"><use href="#i-folder"/></svg><i class="vl" style="left:32px;top:714px;height:17px"></i><i class="hl" style="left:33px;top:722px;width:7px"></i><svg class="ti" style="left:40px;top:714px" width="16" height="16"><use href="#i-folder"/></svg></div>
<div id="grid">
<div class="gr" style="top:-7px"><span class="fc fg"><svg width="18" height="17"><use href="#i-flagg"/></svg></span><span class="gc" style="left:21px">PU 5</span><span class="gc" style="left:149px">P 1</span><span class="gc" style="left:276px">Q7516</span><span class="gc" style="left:404px">Trübung</span><span class="gc" style="left:531px">Plant 1</span><span class="gc" style="left:660px">Test Department 6</span></div>
<div class="gr" style="top:11px"><span class="fc fg"><svg width="18" height="17"><use href="#i-flagg"/></svg></span><span class="gc" style="left:21px">PU 5</span><span class="gc" style="left:149px">P 1</span><span class="gc" style="left:276px">Q7518</span><span class="gc" style="left:404px">OIW</span><span class="gc" style="left:531px">Plant 1</span><span class="gc" style="left:660px">Test Department 6</span></div>
<div class="gr" style="top:29px"><span class="fc fg"><svg width="18" height="17"><use href="#i-flagg"/></svg></span><span class="gc" style="left:21px">PU 5</span><span class="gc" style="left:149px">P 1</span><span class="gc" style="left:276px">PS - LL</span><span class="gc" style="left:404px">P-Sammler</span><span class="gc" style="left:531px">Plant 1</span><span class="gc" style="left:660px">Test Department 6</span></div>
<div class="gr" style="top:47px"><span class="fc fy"><svg width="18" height="17"><use href="#i-flagy"/></svg></span><span class="gc" style="left:21px">PU 5</span><span class="gc" style="left:149px">P 1</span><span class="gc" style="left:276px">QTest</span><span class="gc" style="left:404px">SO2</span><span class="gc" style="left:531px">Plant 1</span><span class="gc" style="left:660px">Test Department 7</span></div>
<div class="gr" style="top:65px"><span class="fc fg"><svg width="18" height="17"><use href="#i-flagg"/></svg></span><span class="gc" style="left:21px">PU 1</span><span class="gc" style="left:149px">001</span><span class="gc" style="left:276px">Q0001</span><span class="gc" style="left:404px">SO2</span><span class="gc" style="left:531px">Plant 1</span><span class="gc" style="left:660px">Test Department 5</span></div>
<div class="gr" style="top:83px"><span class="fc fg"><svg width="18" height="17"><use href="#i-flagg"/></svg></span><span class="gc" style="left:21px">PU 5</span><span class="gc" style="left:149px">P 1</span><span class="gc" style="left:276px">Q7515</span><span class="gc" style="left:404px">pH</span><span class="gc" style="left:531px">Plant 1</span><span class="gc" style="left:660px">Test Department 6</span></div>
<div class="gr" style="top:101px"><span class="fc fg"><svg width="18" height="17"><use href="#i-flagg"/></svg></span><span class="gc" style="left:21px">PU 4</span><span class="gc" style="left:149px">P 2</span><span class="gc" style="left:276px">Q5231</span><span class="gc" style="left:404px">pH</span><span class="gc" style="left:531px">Plant 2</span><span class="gc" style="left:660px">Test Department 1</span></div>
<div class="gr" style="top:119px"><span class="fc fg"><svg width="18" height="17"><use href="#i-flagg"/></svg></span><span class="gc" style="left:21px">PU 4</span><span class="gc" style="left:149px">P 2</span><span class="gc" style="left:276px">Q5243</span><span class="gc" style="left:404px">BSB</span><span class="gc" style="left:531px">Plant 2</span><span class="gc" style="left:660px">Test Department 1</span></div>
<div class="gr del" style="top:137px"><span class="fc fg"><svg width="18" height="17"><use href="#i-flagg"/></svg></span><span class="gc" style="left:21px">PU 4</span><span class="gc" style="left:149px">P 2</span><span class="gc" style="left:276px">PS</span><span class="gc" style="left:404px">O2</span><span class="gc" style="left:531px">Plant 2</span><span class="gc" style="left:660px">Test Department 1</span></div>
<div class="gr sel" style="top:155px"><span class="fc fg"><svg width="18" height="17"><use href="#i-flagg"/></svg></span><span class="gc" style="left:21px">PU 4</span><span class="gc" style="left:149px">P 2</span><span class="gc" style="left:276px">Q5241</span><span class="gc" style="left:404px">pH</span><span class="gc" style="left:531px">Plant 2</span><span class="gc" style="left:660px">Test Department 1</span></div>
<div class="gr" style="top:173px"><span class="fc fg"><svg width="18" height="17"><use href="#i-flagg"/></svg></span><span class="gc" style="left:21px">PU 4</span><span class="gc" style="left:149px">P 2</span><span class="gc" style="left:276px">Q5244</span><span class="gc" style="left:404px">NH4</span><span class="gc" style="left:531px">Plant 2</span><span class="gc" style="left:660px">Test Department 1</span></div>
<div class="gr" style="top:191px"><span class="fc fg"><svg width="18" height="17"><use href="#i-flagg"/></svg></span><span class="gc" style="left:21px">PU 4</span><span class="gc" style="left:149px">P 3</span><span class="gc" style="left:276px">Q5372</span><span class="gc" style="left:404px">OIW</span><span class="gc" style="left:531px">Plant 3</span><span class="gc" style="left:660px">Test Department 1</span></div>
<div class="gr" style="top:209px"><span class="fc fg"><svg width="18" height="17"><use href="#i-flagg"/></svg></span><span class="gc" style="left:21px">PU 4</span><span class="gc" style="left:149px">P 3</span><span class="gc" style="left:276px">Q5374</span><span class="gc" style="left:404px">NH4</span><span class="gc" style="left:531px">Plant 3</span><span class="gc" style="left:660px">Test Department 1</span></div>
<div class="gr" style="top:227px"><span class="fc fg"><svg width="18" height="17"><use href="#i-flagg"/></svg></span><span class="gc" style="left:21px">PU 4</span><span class="gc" style="left:149px">P 3</span><span class="gc" style="left:276px">Q5313</span><span class="gc" style="left:404px">pH</span><span class="gc" style="left:531px">Plant 3</span><span class="gc" style="left:660px">Test Department 1</span></div>
<div class="gr" style="top:245px"><span class="fc fr"><svg width="18" height="17"><use href="#i-flagr"/></svg></span><span class="gc" style="left:21px">PU 4</span><span class="gc" style="left:149px">P 3</span><span class="gc" style="left:276px">Q5312</span><span class="gc" style="left:404px">pH</span><span class="gc" style="left:531px">Plant 3</span><span class="gc" style="left:660px">Test Department 1</span></div>
<div class="gr" style="top:263px"><span class="fc fg"><svg width="18" height="17"><use href="#i-flagg"/></svg></span><span class="gc" style="left:21px">PU 4</span><span class="gc" style="left:149px">P 3</span><span class="gc" style="left:276px">Q5311</span><span class="gc" style="left:404px">pH</span><span class="gc" style="left:531px">Plant 3</span><span class="gc" style="left:660px">Test Department 1</span></div>
<div class="gr" style="top:281px"><span class="fc fg"><svg width="18" height="17"><use href="#i-flagg"/></svg></span><span class="gc" style="left:21px">PU 4</span><span class="gc" style="left:149px">P 3</span><span class="gc" style="left:276px">Pxy</span><span class="gc" style="left:404px">Pour Point</span><span class="gc" style="left:531px">Plant 3</span><span class="gc" style="left:660px">Test Department 1</span></div>
<div class="gr" style="top:299px"><span class="fc fg"><svg width="18" height="17"><use href="#i-flagg"/></svg></span><span class="gc" style="left:21px">PU 4</span><span class="gc" style="left:149px">P 3</span><span class="gc" style="left:276px">Q5321</span><span class="gc" style="left:404px">pH</span><span class="gc" style="left:531px">Plant 3</span><span class="gc" style="left:660px">Test Department 1</span></div>
<div class="gr" style="top:317px"><span class="fc fg"><svg width="18" height="17"><use href="#i-flagg"/></svg></span><span class="gc" style="left:21px">PU 4</span><span class="gc" style="left:149px">P 3</span><span class="gc" style="left:276px">Q5371</span><span class="gc" style="left:404px">pH</span><span class="gc" style="left:531px">Plant 3</span><span class="gc" style="left:660px">Test Department 1</span></div>
<div class="gr del" style="top:335px"><span class="fc fr"><svg width="18" height="17"><use href="#i-flagr"/></svg></span><span class="gc" style="left:21px">PU 4</span><span class="gc" style="left:149px">P 3</span><span class="gc" style="left:276px">Q5373k</span><span class="gc" style="left:404px">BSB</span><span class="gc" style="left:531px">Plant 3</span><span class="gc" style="left:660px">Test Department 1</span></div>
<div class="gr" style="top:353px"><span class="fc fg"><svg width="18" height="17"><use href="#i-flagg"/></svg></span><span class="gc" style="left:21px">PU 4</span><span class="gc" style="left:149px">P 3</span><span class="gc" style="left:276px">Q5301</span><span class="gc" style="left:404px">pH</span><span class="gc" style="left:531px">Plant 3</span><span class="gc" style="left:660px">Test Department 1</span></div>
<div class="gr" style="top:371px"><span class="fc fg"><svg width="18" height="17"><use href="#i-flagg"/></svg></span><span class="gc" style="left:21px">PU 4</span><span class="gc" style="left:149px">P 3</span><span class="gc" style="left:276px">Q5373</span><span class="gc" style="left:404px">BSB</span><span class="gc" style="left:531px">Plant 3</span><span class="gc" style="left:660px">Test Department 1</span></div>
<div class="gr" style="top:389px"><span class="fc fg"><svg width="18" height="17"><use href="#i-flagg"/></svg></span><span class="gc" style="left:21px">PU 4</span><span class="gc" style="left:149px">P 3</span><span class="gc" style="left:276px">Q5361</span><span class="gc" style="left:404px">pH</span><span class="gc" style="left:531px">Plant 3</span><span class="gc" style="left:660px">Test Department 1</span></div>
<div class="gr" style="top:407px"><span class="fc fg"><svg width="18" height="17"><use href="#i-flagg"/></svg></span><span class="gc" style="left:21px">PU 6</span><span class="gc" style="left:149px">P 4</span><span class="gc" style="left:276px">Q1111</span><span class="gc" style="left:404px">CO</span><span class="gc" style="left:531px">Plant 4</span><span class="gc" style="left:660px">Test Department 5</span></div>
<div class="gr" style="top:425px"><span class="fc fg"><svg width="18" height="17"><use href="#i-flagg"/></svg></span><span class="gc" style="left:21px">PU 6</span><span class="gc" style="left:149px">P 4</span><span class="gc" style="left:276px">Q1013</span><span class="gc" style="left:404px">CO</span><span class="gc" style="left:531px">Plant 4</span><span class="gc" style="left:660px">Test Department 5</span></div>
<div class="gr" style="top:443px"><span class="fc fg"><svg width="18" height="17"><use href="#i-flagg"/></svg></span><span class="gc" style="left:21px">PU 6</span><span class="gc" style="left:149px">P 4</span><span class="gc" style="left:276px">Q1113</span><span class="gc" style="left:404px">CO</span><span class="gc" style="left:531px">Plant 4</span><span class="gc" style="left:660px">Test Department 5</span></div>
<div class="gr" style="top:461px"><span class="fc fg"><svg width="18" height="17"><use href="#i-flagg"/></svg></span><span class="gc" style="left:21px">PU 6</span><span class="gc" style="left:149px">P 4</span><span class="gc" style="left:276px">Q1010</span><span class="gc" style="left:404px">O2</span><span class="gc" style="left:531px">Plant 4</span><span class="gc" style="left:660px">Test Department 5</span></div>
<div class="gr" style="top:479px"><span class="fc fg"><svg width="18" height="17"><use href="#i-flagg"/></svg></span><span class="gc" style="left:21px">PU 6</span><span class="gc" style="left:149px">P 4</span><span class="gc" style="left:276px">Q1003</span><span class="gc" style="left:404px">O2</span><span class="gc" style="left:531px">Plant 4</span><span class="gc" style="left:660px">Test Department 5</span></div>
<div class="gr" style="top:497px"><span class="fc fg"><svg width="18" height="17"><use href="#i-flagg"/></svg></span><span class="gc" style="left:21px">PU 6</span><span class="gc" style="left:149px">P 4</span><span class="gc" style="left:276px">Q1103</span><span class="gc" style="left:404px">O2</span><span class="gc" style="left:531px">Plant 4</span><span class="gc" style="left:660px">Test Department 5</span></div>
<div class="gr" style="top:515px"><span class="fc fg"><svg width="18" height="17"><use href="#i-flagg"/></svg></span><span class="gc" style="left:21px">PU 6</span><span class="gc" style="left:149px">P 4</span><span class="gc" style="left:276px">Q1110</span><span class="gc" style="left:404px">O2</span><span class="gc" style="left:531px">Plant 4</span><span class="gc" style="left:660px">Test Department 5</span></div>
<div class="gr" style="top:533px"><span class="fc fg"><svg width="18" height="17"><use href="#i-flagg"/></svg></span><span class="gc" style="left:21px">PU 6</span><span class="gc" style="left:149px">P 4</span><span class="gc" style="left:276px">Q1011</span><span class="gc" style="left:404px">CO</span><span class="gc" style="left:531px">Plant 4</span><span class="gc" style="left:660px">Test Department 5</span></div>
<div class="gr" style="top:551px"><span class="fc fg"><svg width="18" height="17"><use href="#i-flagg"/></svg></span><span class="gc" style="left:21px">PU 3</span><span class="gc" style="left:149px">P 6</span><span class="gc" style="left:276px">Q5005</span><span class="gc" style="left:404px">pH</span><span class="gc" style="left:531px">Plant 6</span><span class="gc" style="left:660px">Test Department 1</span></div>
<div class="gr" style="top:569px"><span class="fc fg"><svg width="18" height="17"><use href="#i-flagg"/></svg></span><span class="gc" style="left:21px">PU 3</span><span class="gc" style="left:149px">P 6</span><span class="gc" style="left:276px">Q5038</span><span class="gc" style="left:404px">CO</span><span class="gc" style="left:531px">Plant 6</span><span class="gc" style="left:660px">Test Department 5</span></div>
<div class="gr" style="top:587px"><span class="fc fg"><svg width="18" height="17"><use href="#i-flagg"/></svg></span><span class="gc" style="left:21px">PU 3</span><span class="gc" style="left:149px">P 6</span><span class="gc" style="left:276px">Q1503</span><span class="gc" style="left:404px">GC</span><span class="gc" style="left:531px">Plant 6</span><span class="gc" style="left:660px">Test Department 4</span></div>
<div class="gr" style="top:605px"><span class="fc fg"><svg width="18" height="17"><use href="#i-flagg"/></svg></span><span class="gc" style="left:21px">PU 3</span><span class="gc" style="left:149px">P 6</span><span class="gc" style="left:276px">Q5034</span><span class="gc" style="left:404px">O2</span><span class="gc" style="left:531px">Plant 6</span><span class="gc" style="left:660px">Test Department 5</span></div>
<div class="gr" style="top:623px"><span class="fc fg"><svg width="18" height="17"><use href="#i-flagg"/></svg></span><span class="gc" style="left:21px">PU 3</span><span class="gc" style="left:149px">P 6</span><span class="gc" style="left:276px">Q5033</span><span class="gc" style="left:404px">O2</span><span class="gc" style="left:531px">Plant 6</span><span class="gc" style="left:660px">Test Department 5</span></div>
<div class="gr" style="top:641px"><span class="fc fg"><svg width="18" height="17"><use href="#i-flagg"/></svg></span><span class="gc" style="left:21px">PU 3</span><span class="gc" style="left:149px">P 6</span><span class="gc" style="left:276px">Q5003</span><span class="gc" style="left:404px">O2</span><span class="gc" style="left:531px">Plant 6</span><span class="gc" style="left:660px">Test Department 5</span></div>
<div class="gr" style="top:659px"><span class="fc fg"><svg width="18" height="17"><use href="#i-flagg"/></svg></span></div>
</div>
</div></body></html>
